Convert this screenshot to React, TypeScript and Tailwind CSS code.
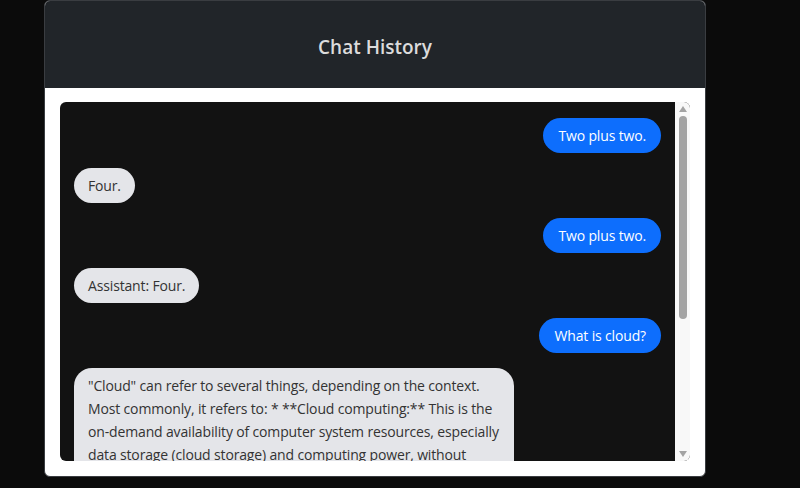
import React from 'react'

type Message = { role: 'user' | 'assistant'; text: string }

const messages: Message[] = [
  { role: 'user', text: 'Two plus two.' },
  { role: 'assistant', text: 'Four.' },
  { role: 'user', text: 'Two plus two.' },
  { role: 'assistant', text: 'Assistant: Four.' },
  { role: 'user', text: 'What is cloud?' },
  {
    role: 'assistant',
    text:
      '"Cloud" can refer to several things, depending on the context. Most commonly, it refers to: * **Cloud computing:** This is the on-demand availability of computer system resources, especially data storage (cloud storage) and computing power, without direct active management by the user. * **Clouds in the sky:** Visible masses of condensed water vapor floating in the atmosphere.',
  },
]

function Bubble({ message }: { message: Message }) {
  const isUser = message.role === 'user'
  return (
    <div className={isUser ? 'flex justify-end' : 'flex justify-start'}>
      <div
        className={
          isUser
            ? 'max-w-[440px] rounded-[18px] bg-[#0d6efd] px-[15px] py-[6px] text-white'
            : 'max-w-[440px] rounded-[18px] bg-[#e4e5e9] px-[14px] py-[6px] text-[#333]'
        }
      >
        {message.text}
      </div>
    </div>
  )
}

// Plain light track with arrows and a thumb, like the classic desktop scrollbar
function Scrollbar() {
  return (
    <div className="flex w-[15px] shrink-0 flex-col items-center bg-[#f8f8f8] py-[3px]">
      <svg width="8" height="6" viewBox="0 0 8 6" className="mt-[1px]">
        <path d="M4 0 L8 6 L0 6 Z" fill="#a3a3a3" />
      </svg>
      <div className="mt-[4px] h-[203px] w-[8px] rounded-full bg-[#a3a3a3]" />
      <div className="flex-1" />
      <svg width="8" height="6" viewBox="0 0 8 6" className="mb-[1px]">
        <path d="M0 0 L8 0 L4 6 Z" fill="#a3a3a3" />
      </svg>
    </div>
  )
}

export default function App() {
  return (
    <div
      className="min-h-[488px] bg-[#0b0b0b] pl-[44px]"
      style={{ fontFamily: '"Open Sans", "Noto Sans", sans-serif' }}
    >
      <div className="w-[662px] overflow-hidden rounded-b-[6px] rounded-t-[6px] border border-[#3a3d41] bg-white">
        <div className="flex h-[87px] items-center justify-center bg-[#212529] pt-[6px]">
          <h2 className="text-[19px] font-semibold text-[#dcdcdc]">Chat History</h2>
        </div>
        <div className="px-[15px] pb-[15px] pt-[14px]">
          <div className="flex h-[359px] overflow-hidden rounded-[6px] bg-[#121212]">
            <div className="flex flex-1 flex-col gap-[15px] overflow-hidden px-[14px] pt-[16px] text-[14px] leading-[23px] tracking-[-0.15px]">
              {messages.map((m, i) => (
                <Bubble key={i} message={m} />
              ))}
            </div>
            <Scrollbar />
          </div>
        </div>
      </div>
    </div>
  )
}
